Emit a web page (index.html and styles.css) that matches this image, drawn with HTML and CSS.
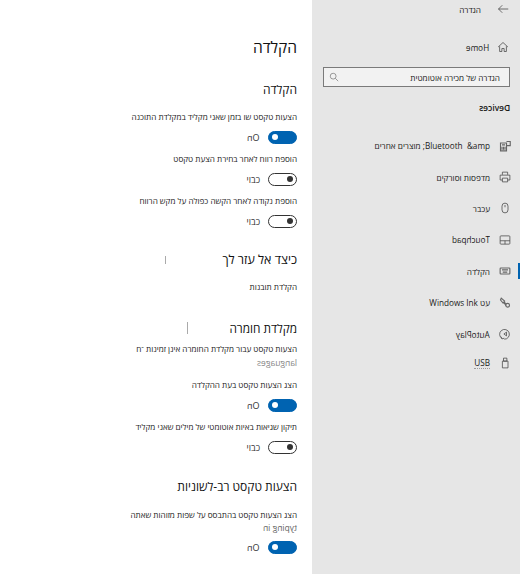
FILE: index.html
```html
<!DOCTYPE html>
<html lang="he" dir="rtl">
<head>
<meta charset="utf-8">
<title>הקלדה</title>
<link rel="stylesheet" href="styles.css">
</head>
<body>
<main class="content">
  <h1 class="page-title">הקלדה</h1>
  <h2 class="section first">הקלדה</h2>
  <p class="label after-first">הצעות טקסט שו בזמן שאני מקליד במקלדת התוכנה</p>
  <div class="toggle-row"><span class="switch on"></span><span class="state mirror">On</span></div>
  <p class="label">הוספת רווח לאחר בחירת הצעת טקסט</p>
  <div class="toggle-row"><span class="switch"></span><span class="state">כבוי</span></div>
  <p class="label">הוספת נקודה לאחר הקשה כפולה על מקש הרווח</p>
  <div class="toggle-row"><span class="switch"></span><span class="state">כבוי</span></div>
  <h2 class="section help">כיצד אל עזר לך</h2>
  <p class="label tips">הקלדת תובנות</p>
  <h2 class="section hardware">מקלדת חומרה</h2>
  <p class="label after-hardware">הצעות טקסט עבור מקלדת החומרה אינן זמינות ־ח</p>
  <p class="label sub"><span class="mirror">languages</span></p>
  <p class="label gap">הצג הצעות טקסט בעת ההקלדה</p>
  <div class="toggle-row"><span class="switch on"></span><span class="state mirror">On</span></div>
  <p class="label">תיקון שגיאות באיות אוטומטי של מילים שאני מקליד</p>
  <div class="toggle-row"><span class="switch"></span><span class="state">כבוי</span></div>
  <h2 class="section multi">הצעות טקסט רב-לשוניות</h2>
  <p class="label after-multi">הצג הצעות טקסט בהתבסס על שפות מזוהות שאתה</p>
  <p class="label sub2"><span class="mirror">typing in</span></p>
  <div class="toggle-row"><span class="switch on"></span><span class="state mirror">On</span></div>
</main>
<aside class="sidebar">
  <div class="back">
    <svg class="icon" viewBox="0 0 16 16"><path d="M15 8H2M7 3 2 8l5 5"/></svg>
    <span>הגדרה</span>
  </div>
  <div class="home">
    <svg class="icon" viewBox="0 0 16 16"><path d="M1.500 8 8 2l6.500 6M3.500 7v7h3v-4h3v4h3V7"/></svg>
    <span class="mirror">Home</span>
  </div>
  <div class="search">
    <span>הגדרה של מכירה אוטומטית</span>
    <svg class="search-icon" viewBox="0 0 12 12"><circle cx="5" cy="5" r="3.500"/><path d="M7.500 7.500 11 11"/></svg>
  </div>
  <div class="group"><span class="mirror">Devices</span></div>
  <nav class="nav">
    <a class="item">
      <svg class="icon heavy" viewBox="0 0 16 16"><path d="M2 4h8v10.500H2zM4 6.500h4M4 9v4M6 9v4M8 9v4M10 2h5v5.500h-5"/></svg>
      <span>Bluetooth &nbsp;&amp;amp; מוצרים אחרים</span>
    </a>
    <a class="item">
      <svg class="icon" viewBox="0 0 16 16"><path d="M4.500 5V1.500h7V5M4.500 12h-3V5.500h13V12h-3M4.500 9.500h7v5h-7z"/></svg>
      <span>מדפסות וסורקים</span>
    </a>
    <a class="item">
      <svg class="icon" viewBox="0 0 16 16"><rect x="4" y="1.500" width="8" height="13" rx="4"/><path d="M8 4v3"/></svg>
      <span>עכבר</span>
    </a>
    <a class="item">
      <svg class="icon" viewBox="0 0 16 16"><rect x="1.500" y="2.500" width="13" height="11" rx="1"/><path d="M1.500 9h13M8 9v4.500"/></svg>
      <span class="mirror">Touchpad</span>
    </a>
    <a class="item active">
      <svg class="icon heavy" viewBox="0 0 16 16"><rect x="1.500" y="4" width="13" height="8" rx="1"/><path d="M4 6.500h8M5 9.500h6"/></svg>
      <span>הקלדה</span>
    </a>
    <a class="item">
      <svg class="icon heavy" viewBox="0 0 16 16"><path d="M3 1.500l4.500 4-2 2.500L2 4zM7 7l2 2"/><circle cx="11.500" cy="11" r="2.500"/><path d="M6.500 7.500l3 4"/></svg>
      <span>עט Windows Ink</span>
    </a>
    <a class="item">
      <svg class="icon" viewBox="0 0 16 16"><path d="M4 14a6.500 6.500 0 1 1 3 .9M2.500 11.500 4 14.500l3-.9"/><path d="M10 5.500v5L6.500 8z"/></svg>
      <span class="mirror">AutoPlay</span>
    </a>
    <a class="item usb">
      <svg class="icon" viewBox="0 0 16 16"><path d="M6 1.500h4.500v4H6zM4.500 5.500h7.500v9H4.500z"/></svg>
      <span class="underlined">USB</span>
    </a>
  </nav>
</aside>
</body>
</html>
```
FILE: styles.css
```css
* { box-sizing: border-box; }
html, body { margin: 0; height: 100%; }
body {
  width: 520px;
  height: 574px;
  overflow: hidden;
  display: flex;
  flex-direction: row-reverse;
  direction: rtl;
  font-family: "Open Sans", "Liberation Sans", sans-serif;
  color: #1a1a1a;
  background: #fff;
}
.mirror { display: inline-block; transform: scaleX(-1); }
.sidebar {
  width: 208px;
  flex: none;
  background: #e6e6e6;
  font-size: 8.200px;
  padding-right: 10px;
}
.content {
  width: 312px;
  flex: none;
  padding: 36px 15px 0 0;
}
.page-title { margin: 0; font-size: 15.500px; font-weight: 400; line-height: 22px; color: #111; }
.section { margin: 0; font-size: 12px; font-weight: 400; line-height: 18px; color: #111; position: relative; }
.section.first { margin-top: 23px; }
.section.help { margin-top: 19px; font-size: 12.500px; }
.section.hardware { margin-top: 25px; font-size: 11.800px; }
.section.multi { margin-top: 20px; }
.section.help::after, .section.hardware::after {
  content: "";
  position: absolute;
  width: 1px;
  background: #aaa;
}
.section.help::after { left: 165px; top: 5px; height: 8px; }
.section.hardware::after { left: 187px; top: 3px; height: 12px; }
.label { margin: 0; font-size: 8.150px; line-height: 14px; color: #1c1c1c; }
.label.after-first { margin-top: 11px; }
.label.tips { margin-top: 11px; }
.label.after-hardware { margin-top: 5px; }
.label.after-multi { margin-top: 12px; }
.label.sub { color: #888; font-size: 8.500px; }
.label.sub2 { color: #666; font-size: 8.500px; line-height: 12px; }
.label.gap { margin-top: 8px; }
.toggle-row {
  display: flex;
  align-items: center;
  gap: 8px;
  height: 22px;
  margin-top: 2px;
  margin-bottom: 4px;
  font-size: 9px;
  color: #333;
}
.switch {
  position: relative;
  width: 29px;
  height: 13px;
  border: 1.500px solid #333;
  border-radius: 7px;
  flex: none;
}
.switch::after {
  content: "";
  position: absolute;
  top: 2px;
  right: 3px;
  width: 6px;
  height: 6px;
  border-radius: 50%;
  background: #333;
}
.switch.on { background: #0063b1; border-color: #0063b1; }
.switch.on::after { right: auto; left: 3px; background: #fff; }
.icon { width: 12px; height: 12px; flex: none; fill: none; stroke: #444; stroke-width: 1; }
.icon.heavy { stroke: #666; stroke-width: 1.500; }
.back, .home { display: flex; align-items: center; }
.back { height: 18px; gap: 16px; padding-right: 1px; }
.home { height: 18px; margin-top: 20px; gap: 8px; padding-right: 1px; }
.search {
  display: flex;
  justify-content: space-between;
  align-items: center;
  width: 187px;
  height: 20px;
  margin-top: 11px;
  padding: 0 9px 0 5px;
  background: #f2f2f2;
  border: 1px solid #7a7a7a;
}
.search-icon { width: 10px; height: 10px; fill: none; stroke: #888; }
.group { margin-top: 14px; height: 14px; line-height: 14px; font-weight: 600; font-size: 8.500px; }
.nav { margin-top: 15px; display: flex; flex-direction: column; margin-right: -10px; padding-right: 9px; }
.item { display: flex; align-items: center; gap: 9px; height: 31.400px; position: relative; }
.item.usb { margin-top: -2px; }
.item.active::after {
  content: "";
  position: absolute;
  right: -9px;
  top: 7px;
  width: 2px;
  height: 16px;
  background: #0063b1;
}
.underlined { border-bottom: 1px dotted #999; }
```
